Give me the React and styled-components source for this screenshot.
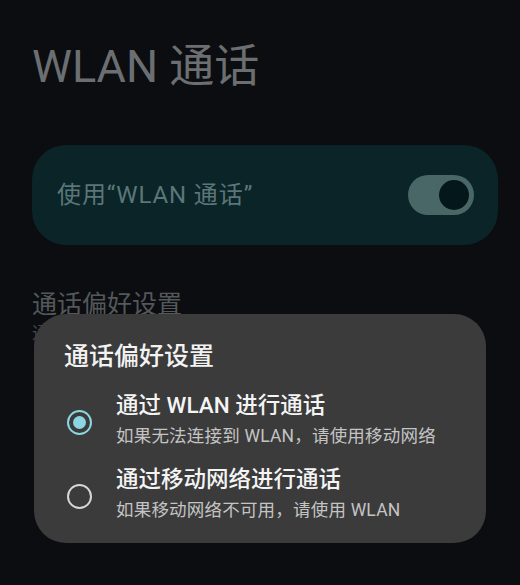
import React from 'react';
import styled, { createGlobalStyle } from 'styled-components';

const GlobalStyle = createGlobalStyle`
  html, body {
    margin: 0;
    padding: 0;
    background: #0b0d10;
    font-family: Roboto, "Noto Sans CJK SC", sans-serif;
  }
`;

const Screen = styled.div`
  position: relative;
  width: 520px;
  height: 585px;
  overflow: hidden;
  background: #0b0d10;
`;

const Page = styled.div`
  display: flex;
  flex-direction: column;
  padding: 37px 22px 0 32px;
`;

const Title = styled.h1`
  margin: 0;
  font-size: 45px;
  font-weight: 400;
  line-height: 60px;
  color: #6b6f72;
`;

const SwitchCard = styled.div`
  margin-top: 48px;
  height: 100px;
  border-radius: 34px;
  background: #0a2427;
  display: flex;
  align-items: center;
  justify-content: space-between;
  padding: 0 24px 0 25px;
`;

const CardLabel = styled.span`
  font-size: 24px;
  line-height: 30px;
  letter-spacing: 0.9px;
  color: #5b7679;
`;

const Track = styled.div`
  width: 66px;
  height: 40px;
  border-radius: 20px;
  background: #4a6768;
  display: flex;
  align-items: center;
  justify-content: ${p => (p.$on ? 'flex-end' : 'flex-start')};
  padding: 0 5px;
  box-sizing: border-box;
`;

const Thumb = styled.div`
  width: 30px;
  height: 30px;
  border-radius: 50%;
  background: #04171a;
`;

const SectionTitle = styled.div`
  margin-top: 44px;
  font-size: 25px;
  line-height: 32px;
  color: #54585b;
`;

const SectionSub = styled.div`
  font-size: 17px;
  line-height: 24px;
  color: #44484b;
`;

const Dialog = styled.div`
  position: absolute;
  left: 34px;
  top: 314px;
  width: 452px;
  height: 229px;
  box-sizing: border-box;
  border-radius: 32px;
  background: #3b3b3b;
  padding: 26px 0 0 30px;
  display: flex;
  flex-direction: column;
`;

const DialogTitle = styled.div`
  font-size: 25px;
  line-height: 34px;
  font-weight: 500;
  color: #f2f2f2;
  margin-bottom: 15px;
`;

const Options = styled.div`
  display: flex;
  flex-direction: column;
  gap: 12px;
`;

const Option = styled.div`
  display: flex;
  align-items: center;
`;

const Radio = styled.div`
  width: 25px;
  height: 25px;
  border-radius: 50%;
  box-sizing: border-box;
  border: 2.5px solid ${p => (p.$checked ? '#8ad6e2' : '#d6d6d6')};
  display: flex;
  align-items: center;
  justify-content: center;
  margin: 4px 24px 0 3px;
  flex-shrink: 0;

  &::after {
    content: '';
    display: ${p => (p.$checked ? 'block' : 'none')};
    width: 13px;
    height: 13px;
    border-radius: 50%;
    background: #8ad6e2;
  }
`;

const OptionText = styled.div`
  display: flex;
  flex-direction: column;
`;

const OptionTitle = styled.div`
  font-size: 22.5px;
  line-height: 32px;
  font-weight: 500;
  color: #f4f4f4;
`;

const OptionSub = styled.div`
  font-size: 17.5px;
  line-height: 30px;
  letter-spacing: 0.2px;
  color: #c4c4c4;
`;

const options = [
  { title: '通过 WLAN 进行通话', sub: '如果无法连接到 WLAN，请使用移动网络', checked: true },
  { title: '通过移动网络进行通话', sub: '如果移动网络不可用，请使用 WLAN', checked: false },
];

export default function App() {
  return (
    <>
      <GlobalStyle />
      <Screen>
        <Page>
          <Title>WLAN 通话</Title>
          <SwitchCard>
            <CardLabel>使用“WLAN 通话”</CardLabel>
            <Track $on>
              <Thumb />
            </Track>
          </SwitchCard>
          <SectionTitle>通话偏好设置</SectionTitle>
          <SectionSub>通过 WLAN 进行通话</SectionSub>
        </Page>
        <Dialog>
          <DialogTitle>通话偏好设置</DialogTitle>
          <Options>
            {options.map(o => (
              <Option key={o.title}>
                <Radio $checked={o.checked} />
                <OptionText>
                  <OptionTitle>{o.title}</OptionTitle>
                  <OptionSub>{o.sub}</OptionSub>
                </OptionText>
              </Option>
            ))}
          </Options>
        </Dialog>
      </Screen>
    </>
  );
}
